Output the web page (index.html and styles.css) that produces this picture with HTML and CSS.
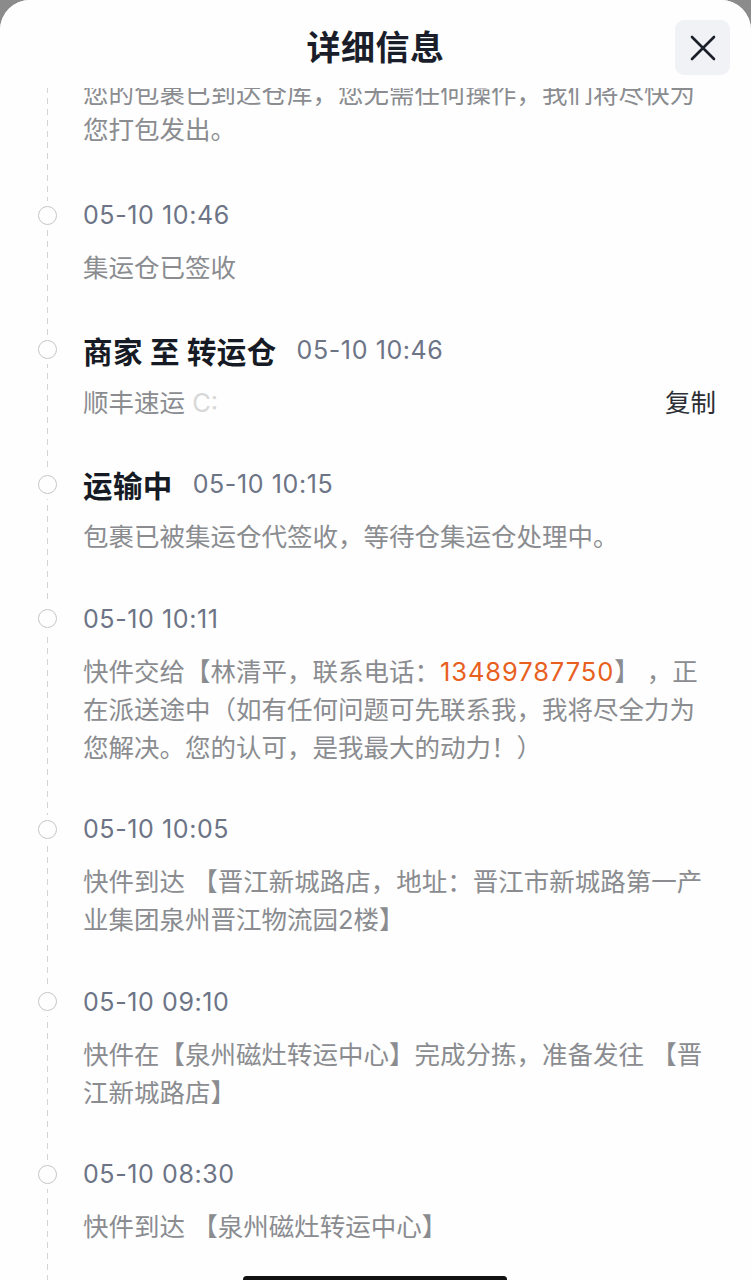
FILE: index.html
```html
<!DOCTYPE html>
<html lang="zh-CN">
<head>
<meta charset="utf-8">
<title>详细信息</title>
<link rel="stylesheet" href="styles.css">
</head>
<body>
<div class="sheet">
  <header class="header">
    <h1 class="title">详细信息</h1>
    <button class="close" aria-label="关闭">
      <svg width="28" height="28" viewBox="0 0 28 28"><path d="M3 3 L25 25 M25 3 L3 25" stroke="#1b1f2a" stroke-width="2.6" stroke-linecap="round" fill="none"/></svg>
    </button>
  </header>
  <div class="scroll">
    <div class="timeline">
      <div class="item first">
        <div class="gutter"></div>
        <div class="desc">您的包裹已到达仓库，您无需任何操作，我们将尽快为<br>您打包发出。</div>
      </div>
      <div class="item">
        <div class="gutter"><span class="dot"></span></div>
        <div class="head"><span class="time">05-10 10:46</span></div>
        <div class="gutter"></div>
        <div class="desc">集运仓已签收</div>
      </div>
      <div class="item">
        <div class="gutter"><span class="dot"></span></div>
        <div class="head"><span class="label">商家 至 转运仓</span><span class="time">05-10 10:46</span></div>
        <div class="gutter"></div>
        <div class="desc row"><span>顺丰速运 <span class="masked">C:</span></span><span class="copy">复制</span></div>
      </div>
      <div class="item">
        <div class="gutter"><span class="dot"></span></div>
        <div class="head"><span class="label">运输中</span><span class="time">05-10 10:15</span></div>
        <div class="gutter"></div>
        <div class="desc">包裹已被集运仓代签收，等待仓集运仓处理中。</div>
      </div>
      <div class="item">
        <div class="gutter"><span class="dot"></span></div>
        <div class="head"><span class="time">05-10 10:11</span></div>
        <div class="gutter"></div>
        <div class="desc">快件交给【林清平，联系电话：<span class="phone">13489787750</span>】 ，正<br>在派送途中（如有任何问题可先联系我，我将尽全力为<br>您解决。您的认可，是我最大的动力！）</div>
      </div>
      <div class="item">
        <div class="gutter"><span class="dot"></span></div>
        <div class="head"><span class="time">05-10 10:05</span></div>
        <div class="gutter"></div>
        <div class="desc">快件到达 【晋江新城路店，地址：晋江市新城路第一产<br>业集团泉州晋江物流园2楼】</div>
      </div>
      <div class="item">
        <div class="gutter"><span class="dot"></span></div>
        <div class="head"><span class="time">05-10 09:10</span></div>
        <div class="gutter"></div>
        <div class="desc">快件在【泉州磁灶转运中心】完成分拣，准备发往 【晋<br>江新城路店】</div>
      </div>
      <div class="item">
        <div class="gutter"><span class="dot"></span></div>
        <div class="head"><span class="time">05-10 08:30</span></div>
        <div class="gutter"></div>
        <div class="desc">快件到达 【泉州磁灶转运中心】</div>
      </div>
    </div>
  </div>
  <div class="home-indicator"></div>
</div>
</body>
</html>
```

FILE: styles.css
```css
* { box-sizing: border-box; }
html, body {
  margin: 0;
  padding: 0;
  background: #8b8b8b;
  height: 1280px;
  overflow: hidden;
}
body {
  font-family: "Inter", "Noto Sans CJK SC", "Noto Sans", sans-serif;
}
.sheet {
  position: relative;
  width: 751px;
  height: 1280px;
  background: #fefefe;
  border-radius: 30px 30px 0 0;
  overflow: hidden;
  display: flex;
  flex-direction: column;
}
.header {
  height: 88px;
  flex: none;
  display: flex;
  align-items: center;
  justify-content: center;
  position: relative;
  background: #fefefe;
  z-index: 2;
}
.title {
  margin: 0;
  margin-top: 3px;
  font-family: "Noto Sans CJK SC", sans-serif;
  font-size: 34px;
  line-height: 40px;
  font-weight: 700;
  color: #1a1e2b;
  letter-spacing: 0.5px;
}
.close {
  position: absolute;
  right: 21px;
  top: 20px;
  width: 55px;
  height: 55px;
  border: none;
  border-radius: 9px;
  background: #f0f2f5;
  display: flex;
  align-items: center;
  justify-content: center;
  padding: 0;
}
.scroll {
  flex: 1;
  overflow: hidden;
  position: relative;
}
.timeline {
  margin-top: -12px;
  padding-right: 35px;
  background-image: linear-gradient(to bottom, #d4d4d4 55%, rgba(255,255,255,0) 55%);
  background-size: 1px 11px;
  background-repeat: repeat-y;
  background-position: 47px 0;
  min-height: 1300px;
}
.item {
  display: grid;
  grid-template-columns: 83px 1fr;
  margin-bottom: 44.5px;
}
.item.first {
  margin-bottom: 49px;
}
.item.first .desc {
  line-height: 36px;
}
.gutter {
  display: flex;
  align-items: flex-start;
}
.dot {
  width: 19px;
  height: 19px;
  margin-left: 38px;
  margin-top: 8.5px;
  border-radius: 50%;
  border: 1.6px solid #c6c6c6;
  background: #fefefe;
  box-shadow: 0 0 0 5px #fefefe;
}
.head {
  height: 36px;
  display: flex;
  align-items: center;
  gap: 20px;
  margin-bottom: 16px;
  overflow: visible;
}
.label {
  font-family: "Noto Sans CJK SC", sans-serif;
  font-size: 29.5px;
  line-height: 36px;
  font-weight: 700;
  color: #161a24;
  letter-spacing: 0.4px;
}
.time {
  font-size: 25px;
  line-height: 36px;
  color: #6c7486;
  letter-spacing: 0.6px;
}
.desc {
  font-family: "Inter", "Noto Sans CJK SC", sans-serif;
  font-size: 25.5px;
  line-height: 38px;
  color: #8a8c90;
}
.desc.row {
  display: flex;
  justify-content: space-between;
  height: 38px;
  overflow: hidden;
}
.desc.row > span {
  line-height: 38px;
}
.masked {
  color: #d8d8d8;
}
.copy {
  color: #2b2e35;
  font-size: 25.5px;
}
.phone {
  color: #e8601d;
  letter-spacing: 0.9px;
}
.home-indicator {
  position: absolute;
  left: 243px;
  bottom: -3px;
  width: 264px;
  height: 7px;
  border-radius: 4px;
  background: #111;
  z-index: 3;
}
```
